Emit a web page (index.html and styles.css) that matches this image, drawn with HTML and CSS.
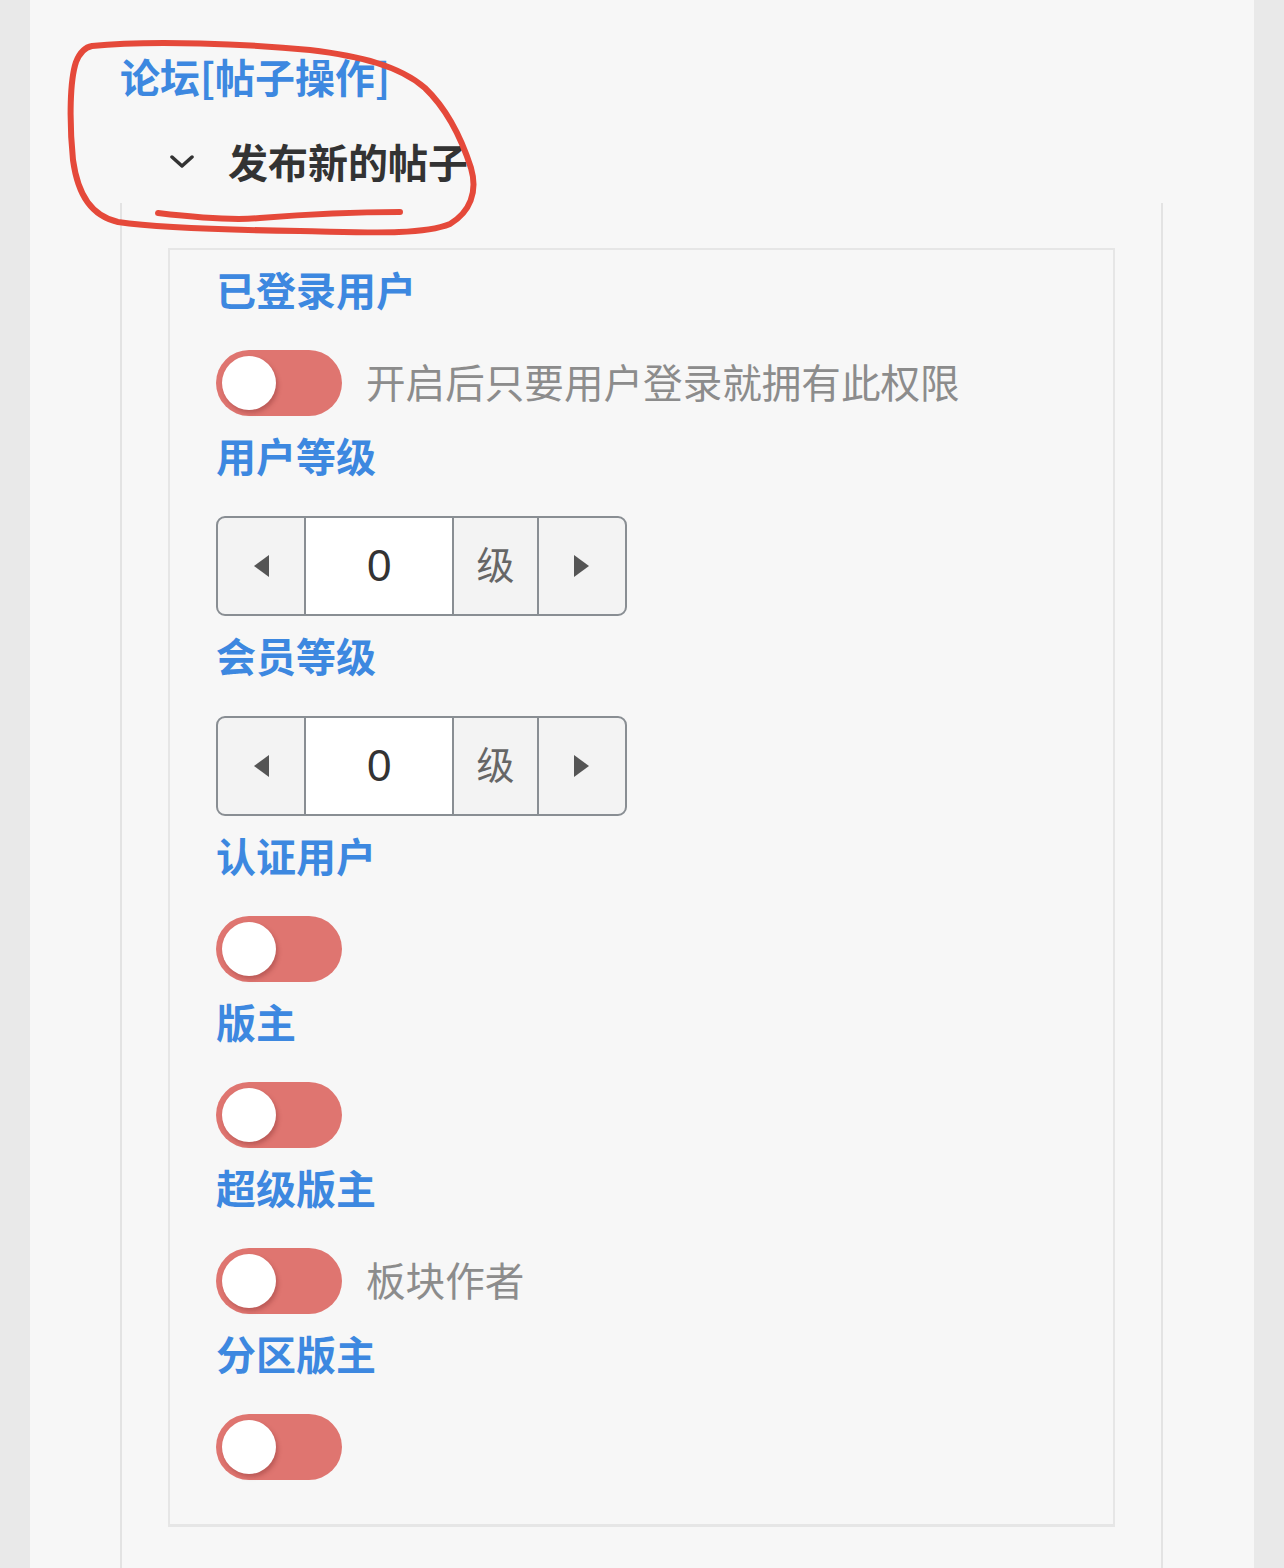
FILE: index.html
```html
<!DOCTYPE html>
<html lang="zh-CN">
<head>
    <meta charset="UTF-8">
    <meta name="viewport" content="width=device-width, initial-scale=1.0">
    <title>论坛权限</title>
    <link rel="stylesheet" href="styles.css">
</head>
<body>
    <div class="page">
        <h1 class="title">论坛[帖子操作]</h1>
        <div class="subtitle">
            <svg class="chevron" width="24" height="14" viewBox="0 0 24 14">
                <path d="M2 2 L12 11 L22 2" fill="none" stroke="#333" stroke-width="3.5" stroke-linecap="round" stroke-linejoin="round"/>
            </svg>
            <span>发布新的帖子</span>
        </div>

        <div class="tree">
            <div class="panel">
                <div class="item">
                    <div class="label">已登录用户</div>
                    <div class="row">
                        <span class="switch"><span class="knob"></span></span>
                        <span class="hint">开启后只要用户登录就拥有此权限</span>
                    </div>
                </div>

                <div class="item">
                    <div class="label">用户等级</div>
                    <div class="stepper">
                        <span class="step"><span class="tri left"></span></span>
                        <span class="value">0</span>
                        <span class="unit">级</span>
                        <span class="step"><span class="tri right"></span></span>
                    </div>
                </div>

                <div class="item">
                    <div class="label">会员等级</div>
                    <div class="stepper">
                        <span class="step"><span class="tri left"></span></span>
                        <span class="value">0</span>
                        <span class="unit">级</span>
                        <span class="step"><span class="tri right"></span></span>
                    </div>
                </div>

                <div class="item">
                    <div class="label">认证用户</div>
                    <div class="row">
                        <span class="switch"><span class="knob"></span></span>
                    </div>
                </div>

                <div class="item">
                    <div class="label">版主</div>
                    <div class="row">
                        <span class="switch"><span class="knob"></span></span>
                    </div>
                </div>

                <div class="item">
                    <div class="label">超级版主</div>
                    <div class="row">
                        <span class="switch"><span class="knob"></span></span>
                        <span class="hint">板块作者</span>
                    </div>
                </div>

                <div class="item">
                    <div class="label">分区版主</div>
                    <div class="row">
                        <span class="switch"><span class="knob"></span></span>
                    </div>
                </div>
            </div>
        </div>

        <!-- 手绘的红色圈注 -->
        <svg class="mark" width="500" height="260" viewBox="0 0 500 260">
            <path d="M92 46 C150 40 250 44 310 50 C360 56 400 66 425 88 C448 110 462 140 471 168 C478 192 470 212 450 224 C420 236 360 232 300 231 C230 230 160 228 118 222 C92 216 78 196 73 160 C69 120 70 80 76 62 C80 52 86 47 92 46 Z" fill="none" stroke="#e5493a" stroke-width="6" stroke-linecap="round" stroke-linejoin="round"/>
            <path d="M158 213 C200 218 240 220 260 218 C310 214 360 212 400 212" fill="none" stroke="#e5493a" stroke-width="6" stroke-linecap="round"/>
        </svg>
    </div>
</body>
</html>
```

FILE: styles.css
```css
/* 权限设置页面 */
body {
    margin: 0;
    padding: 0;
    background-color: #e9e9e9;
    font-family: "Noto Sans CJK SC", "Noto Sans", sans-serif;
}

.page {
    position: relative;
    margin: 0 30px;
    min-height: 1568px;
    padding: 51px 91px 0 90px;
    background-color: #f7f7f7;
    box-sizing: border-box;
}

.title {
    margin: 0;
    font-size: 40px;
    line-height: 50px;
    font-weight: 700;
    color: #3d88e0;
}

.subtitle {
    display: flex;
    align-items: center;
    margin-top: 36px;
    padding-left: 50px;
    height: 50px;
    font-size: 40px;
    font-weight: 700;
    color: #333;
}

.subtitle span {
    margin-bottom: 2px;
}

.chevron {
    margin-right: 34px;
}

.tree {
    margin-top: 16px;
    padding: 45px 46px 0 46px;
    border-left: 2px solid #e3e3e3;
    border-right: 2px solid #e3e3e3;
    min-height: 1320px;
}

/* 内部面板 */
.panel {
    border: 2px solid #e6e6e6;
    border-bottom-width: 3px;
    padding: 16px 30px 28px 46px;
}

.item {
    margin-bottom: 16px;
}

.label {
    font-size: 40px;
    line-height: 46px;
    font-weight: 700;
    color: #3d88e0;
    margin-bottom: 38px;
}

.row {
    display: flex;
    align-items: center;
    height: 66px;
}

.hint {
    margin-left: 24px;
    margin-bottom: 6px;
    font-size: 39.6px;
    color: #8c8c8c;
}

/* 开关 */
.switch {
    position: relative;
    display: inline-block;
    width: 126px;
    height: 66px;
    border-radius: 33px;
    background-color: #df7570;
}

.knob {
    position: absolute;
    top: 6px;
    left: 6px;
    width: 54px;
    height: 54px;
    border-radius: 50%;
    background-color: #fff;
    box-shadow: 2px 3px 4px rgba(120, 40, 40, 0.35);
}

/* 数字选择 */
.stepper {
    display: flex;
    width: 411px;
    height: 100px;
    box-sizing: border-box;
    border: 2px solid #898e93;
    border-radius: 9px;
    overflow: hidden;
    background-color: #f3f3f3;
}

.step {
    display: flex;
    align-items: center;
    justify-content: center;
    width: 87px;
}

.value {
    display: flex;
    align-items: center;
    justify-content: center;
    width: 147px;
    background-color: #fff;
    border-left: 2px solid #898e93;
    border-right: 2px solid #898e93;
    font-family: "Liberation Sans", Arial, sans-serif;
    font-size: 44px;
    color: #333;
}

.unit {
    display: flex;
    align-items: center;
    justify-content: center;
    width: 85px;
    padding-bottom: 8px;
    box-sizing: border-box;
    border-right: 2px solid #898e93;
    font-size: 38px;
    color: #666;
}

.tri {
    width: 0;
    height: 0;
    border-top: 11px solid transparent;
    border-bottom: 11px solid transparent;
}

.tri.left {
    border-right: 15px solid #555;
}

.tri.right {
    border-left: 15px solid #555;
}

.mark {
    position: absolute;
    top: 0;
    left: -30px;
}
```
